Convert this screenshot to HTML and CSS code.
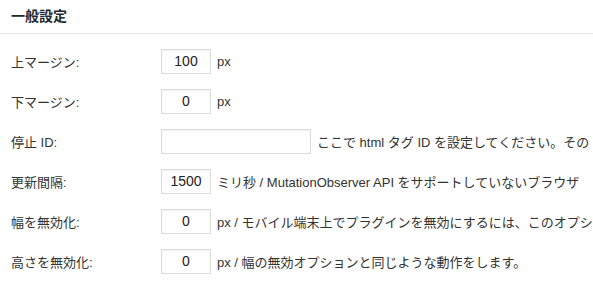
FILE: index.html
```html
<!DOCTYPE html>
<html lang="ja">
<head>
<meta charset="utf-8">
<link rel="stylesheet" href="styles.css">
</head>
<body>
<h2 class="title">一般設定</h2>
<div class="form">
  <div class="row">
    <div class="label">上マージン:</div>
    <div class="field"><span class="input small">100</span><span class="desc">px</span></div>
  </div>
  <div class="row">
    <div class="label">下マージン:</div>
    <div class="field"><span class="input small">0</span><span class="desc">px</span></div>
  </div>
  <div class="row">
    <div class="label">停止 ID:</div>
    <div class="field"><span class="input wide"></span><span class="desc">ここで html タグ ID を設定してください。その</span></div>
  </div>
  <div class="row">
    <div class="label">更新間隔:</div>
    <div class="field"><span class="input small">1500</span><span class="desc">ミリ秒 / MutationObserver API をサポートしていないブラウザ</span></div>
  </div>
  <div class="row">
    <div class="label">幅を無効化:</div>
    <div class="field"><span class="input small">0</span><span class="desc">px / モバイル端末上でプラグインを無効にするには、このオプシ</span></div>
  </div>
  <div class="row">
    <div class="label">高さを無効化:</div>
    <div class="field"><span class="input small">0</span><span class="desc">px / 幅の無効オプションと同じような動作をします。</span></div>
  </div>
</div>
</body>
</html>
```
FILE: styles.css
```css
html, body {
  margin: 0;
  padding: 0;
  background: #fff;
  overflow: hidden;
}
body {
  width: 593px;
  height: 286px;
  font-family: "Liberation Sans", "Noto Sans CJK JP", sans-serif;
  color: #333;
  font-size: 13px;
}
.title {
  margin: 0;
  height: 34px;
  box-sizing: border-box;
  padding: 7px 0 0 11px;
  font-size: 14px;
  line-height: 18px;
  font-weight: bold;
  color: #23282d;
  border-bottom: 1px solid #e8e8e8;
}
.form {
  padding-top: 7px;
}
.row {
  display: flex;
  align-items: center;
  height: 40px;
}
.label {
  width: 150px;
  padding-left: 11px;
  flex: none;
  color: #333;
}
.field {
  display: flex;
  align-items: center;
  white-space: nowrap;
}
.input {
  display: inline-block;
  box-sizing: border-box;
  height: 25px;
  border: 1px solid #ddd;
  box-shadow: inset 0 1px 2px rgba(0,0,0,0.07);
  background: #fff;
  font-size: 14px;
  line-height: 23px;
  text-align: center;
  color: #222;
}
.small { width: 50px; }
.wide { width: 150px; }
.desc {
  margin-left: 6px;
  color: #333;
}
```
